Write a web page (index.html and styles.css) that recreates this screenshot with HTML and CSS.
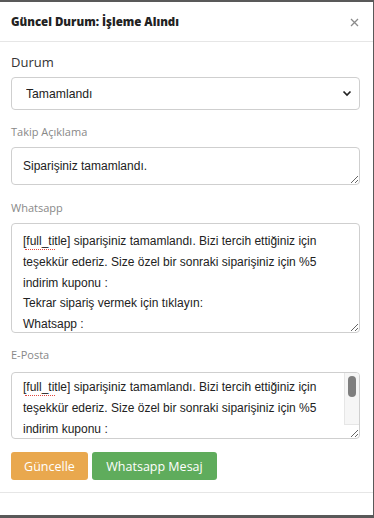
FILE: index.html
```html
<!DOCTYPE html>
<html lang="tr">
<head>
<meta charset="utf-8">
<link rel="stylesheet" href="styles.css">
</head>
<body>
<div class="modal">
  <div class="modal-header">
    <h5 class="modal-title">Güncel Durum: İşleme Alındı</h5>
    <span class="close">
      <svg width="9" height="9" viewBox="0 0 9 9"><path d="M1 1L8 8M8 1L1 8" stroke="#8a8a8a" stroke-width="1.3" fill="none"/></svg>
    </span>
  </div>
  <div class="modal-body">
    <label class="lbl lbl-main">Durum</label>
    <div class="select-wrap">
      <select class="select"><option>Tamamlandı</option></select>
      <svg class="chev" width="10" height="7" viewBox="0 0 10 7"><path d="M1.5 1.5L5 5L8.5 1.5" stroke="#222" stroke-width="1.7" fill="none"/></svg>
    </div>
    <label class="lbl lbl-1">Takip Açıklama</label>
    <textarea class="ta ta-takip">Siparişiniz tamamlandı.</textarea>
    <label class="lbl lbl-2">Whatsapp</label>
    <div class="ta-wrap">
      <textarea class="ta ta-wa">[full_title] siparişiniz tamamlandı. Bizi tercih ettiğiniz için teşekkür ederiz. Size özel bir sonraki siparişiniz için %5 indirim kuponu :
Tekrar sipariş vermek için tıklayın:
Whatsapp :</textarea>
      <span class="spell spell-wa"></span>
    </div>
    <label class="lbl lbl-3">E-Posta</label>
    <div class="ta-wrap">
      <textarea class="ta ta-mail">[full_title] siparişiniz tamamlandı. Bizi tercih ettiğiniz için teşekkür ederiz. Size özel bir sonraki siparişiniz için %5 indirim kuponu :
Tekrar siparişiniz vermek için tıklayın ve sipariş verin:
Whatsapp :
E-Posta :</textarea>
      <span class="spell spell-mail"></span>
      <div class="fake-scroll"><div class="fake-thumb"></div></div>
    </div>
    <div class="actions">
      <button class="btn btn-warn">Güncelle</button>
      <button class="btn btn-ok">Whatsapp Mesaj</button>
    </div>
  </div>
  <div class="modal-footer"></div>
</div>
</body>
</html>
```
FILE: styles.css
```css
html, body {
  margin: 0;
  padding: 0;
  background: #595959;
  height: 518px;
  overflow: hidden;
}
.modal {
  margin-top: 2px;
  width: 373px;
  height: 513px;
  background: #fff;
  display: flex;
  flex-direction: column;
  font-family: "Open Sans", sans-serif;
}
.modal-header {
  height: 40px;
  border-bottom: 1px solid #e6e6e6;
  display: flex;
  align-items: center;
  justify-content: space-between;
  padding: 0 14px 0 11px;
  box-sizing: border-box;
}
.modal-title {
  margin: 0;
  font-size: 11.5px;
  font-weight: 800;
  color: #222;
}
.close {
  display: flex;
  margin-top: 1px;
}
.modal-body {
  padding: 10px 13px 12px 11px;
  display: flex;
  flex-direction: column;
  border-bottom: 1px solid #e6e6e6;
}
.lbl {
  display: block;
  line-height: 20px;
  color: #888;
  font-size: 11px;
  font-weight: 400;
}
.lbl-main {
  color: #333;
  font-size: 13px;
  margin-bottom: 5px;
}
.lbl-1 { margin-top: 12px; margin-bottom: 5px; }
.lbl-2 { margin-top: 13px; margin-bottom: 5px; }
.lbl-3 { margin-top: 12px; margin-bottom: 7px; }
.select-wrap {
  position: relative;
}
.select {
  appearance: none;
  -webkit-appearance: none;
  width: 100%;
  height: 33px;
  border: 1px solid #cfcfcf;
  border-radius: 4px;
  background: #fff;
  padding: 0 0 0 14px;
  font-family: "Liberation Sans", Arial, sans-serif;
  font-size: 12.2px;
  color: #222;
  box-sizing: border-box;
  display: block;
}
.chev {
  position: absolute;
  right: 8px;
  top: 13px;
}
.ta {
  display: block;
  width: 100%;
  box-sizing: border-box;
  border: 1px solid #cfcfcf;
  border-radius: 4px;
  padding: 7px 11px 0 11px;
  font-family: "Liberation Sans", Arial, sans-serif;
  font-size: 12px;
  line-height: 20.75px;
  color: #222;
  resize: vertical;
  margin: 0;
  overflow: hidden;
}
.ta-takip { height: 38px; padding-top: 8px; }
.ta-wa { height: 110px; }
.ta-wrap {
  position: relative;
}
.ta-mail {
  height: 67px;
  padding-top: 4px;
  padding-right: 20px;
}
.spell {
  position: absolute;
  left: 14px;
  width: 30px;
  height: 0;
  border-bottom: 1.5px dotted #e0473e;
}
.spell-wa { top: 26px; }
.spell-mail { top: 23px; }
.fake-scroll {
  position: absolute;
  right: 1px;
  top: 1px;
  width: 14px;
  height: 51px;
  background: #f6f6f6;
  border-left: 1px solid #e6e6e6;
  border-bottom: 1px solid #e6e6e6;
  border-top-right-radius: 3px;
}
.fake-thumb {
  margin: 3px 0 0 3px;
  width: 8px;
  height: 21px;
  border-radius: 4px;
  background: #7f7f7f;
}
.actions {
  display: flex;
  gap: 4px;
  margin-top: 13px;
}
.btn {
  height: 28px;
  border: none;
  border-radius: 3px;
  color: #fff;
  font-family: "Open Sans", sans-serif;
  font-size: 12.5px;
  padding: 0 10px;
  cursor: pointer;
}
.btn-warn {
  background: #e9a84e;
  width: 77px;
}
.btn-ok {
  background: #5fac5c;
  width: 125px;
}
.modal-footer {
  flex: 1;
}
```
